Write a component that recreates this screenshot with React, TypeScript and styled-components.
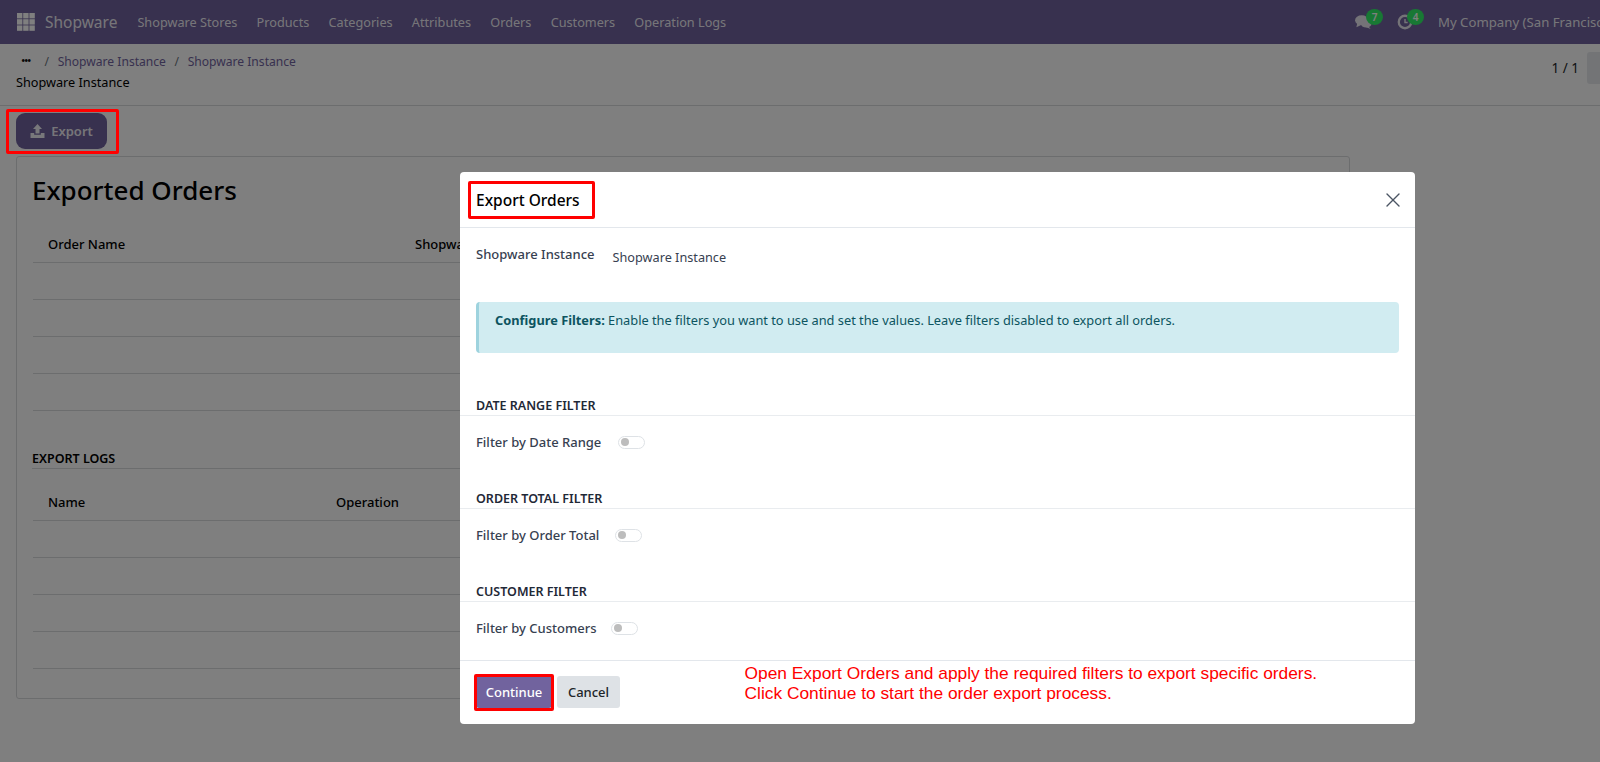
import React from 'react';
import styled, { createGlobalStyle } from 'styled-components';
import { X } from 'lucide-react';

const FONT = '"Noto Sans", "Open Sans", sans-serif';

const GlobalStyle = createGlobalStyle`
  * {
    box-sizing: border-box;
    margin: 0;
    padding: 0;
  }

  html, body {
    width: 1600px;
    height: 762px;
    overflow: hidden;
    background: #fff;
    font-family: ${FONT};
    font-size: 13px;
    color: #212529;
  }
`;

const Page = styled.div`
  position: relative;
  width: 1600px;
  height: 762px;
  overflow: hidden;
  display: flex;
  flex-direction: column;
`;

const Navbar = styled.header`
  height: 44px;
  flex: none;
  background: #71639e;
  display: flex;
  align-items: center;
  padding-left: 17px;
  color: rgba(255, 255, 255, 0.9);
  white-space: nowrap;
`;

const AppsGrid = styled.svg`
  width: 18px;
  height: 18px;
  flex: none;
  margin-right: 10px;
`;

const Brand = styled.span`
  font-size: 15.5px;
  margin-right: 20px;
`;

const NavItem = styled.span`
  font-size: 12.7px;
  margin-right: 19.2px;
`;

const NavRight = styled.div`
  margin-left: auto;
  display: flex;
  align-items: center;
  width: 246px;
  flex: none;
  overflow: hidden;
  height: 100%;
`;

const Systray = styled.span<{ $w: number }>`
  position: relative;
  display: inline-flex;
  width: ${(p) => p.$w}px;
  height: 20px;
  align-items: center;
  flex: none;
`;

const Badge = styled.span<{ $left: number }>`
  position: absolute;
  top: -3px;
  left: ${(p) => p.$left}px;
  width: 17px;
  height: 16px;
  border-radius: 50%;
  background: #30f068;
  color: #fff;
  font-size: 10px;
  font-weight: 600;
  display: flex;
  align-items: center;
  justify-content: center;
`;

const Company = styled.span`
  font-size: 13.2px;
`;

const ControlPanel = styled.div`
  height: 62px;
  flex: none;
  border-bottom: 1px solid #d8dadd;
  padding: 8px 0 0 16px;
  display: flex;
  justify-content: space-between;
`;

const Crumbs = styled.div`
  display: flex;
  flex-direction: column;
  gap: 3px;
`;

const CrumbRow = styled.div`
  display: flex;
  align-items: center;
  height: 18px;
  gap: 8.6px;
  font-size: 12.1px;
  color: #71639e;
`;

const Dots = styled.span`
  font-weight: 800;
  color: #111;
  width: 20px;
  text-align: center;
  font-size: 9px;
  letter-spacing: -0.5px;
  line-height: 10px;
`;

const Slash = styled.span`
  color: #6c757d;
`;

const CrumbTitle = styled.div`
  font-size: 12.7px;
  line-height: 18px;
  color: #000;
`;

const Pager = styled.div`
  display: flex;
  align-items: flex-start;
  gap: 8px;
  height: 32px;
  font-size: 13.5px;
  line-height: 32px;
`;

const PagerButton = styled.span`
  width: 13px;
  height: 32px;
  background: #e7e9ed;
  border-radius: 3px 0 0 3px;
`;

const Toolbar = styled.div`
  height: 50px;
  flex: none;
  padding: 7px 0 0 16px;
`;

const ExportButton = styled.button`
  width: 91px;
  height: 36px;
  background: #71639e;
  color: rgba(255, 255, 255, 0.9);
  border: none;
  border-radius: 9px;
  font-family: inherit;
  font-size: 13px;
  font-weight: 600;
  display: flex;
  align-items: center;
  justify-content: center;
  gap: 6px;
`;

const Sheet = styled.section`
  width: 1334px;
  height: 543px;
  margin-left: 16px;
  flex: none;
  border: 1px solid #d8dadd;
  border-radius: 3px;
  padding: 0 16px;
`;

const SheetTitle = styled.h1`
  font-size: 26px;
  font-weight: 500;
  line-height: 36px;
  color: #000;
  margin: 15px 0 0 -1px;
  height: 54px;
`;

const TableHead = styled.div<{ $second: number }>`
  display: grid;
  grid-template-columns: ${(p) => p.$second}px 1fr;
  height: 37px;
  align-items: center;
  padding: 0 15px;
  font-weight: 500;
  font-size: 13px;
  border-bottom: 1px solid #d8dadd;
  color: #000;
`;

const EmptyRow = styled.div`
  height: 37.1px;
  border-bottom: 1px solid #d8dadd;
`;

const LogsTitle = styled.h2`
  font-size: 12.5px;
  font-weight: 600;
  line-height: 17px;
  margin: 38.4px 0 0 -1px;
  border-bottom: 1px solid #d8dadd;
  color: #000;
  height: 19px;
`;

const LogsSpacer = styled.div`
  height: 15px;
`;

const Overlay = styled.div`
  position: absolute;
  inset: 0;
  background: rgba(0, 0, 0, 0.5);
  display: flex;
  align-items: flex-start;
  justify-content: flex-start;
  padding: 172px 0 0 460px;
`;

const Modal = styled.div`
  position: relative;
  width: 955px;
  height: 552px;
  background: #fff;
  border-radius: 4px;
  display: flex;
  flex-direction: column;
`;

const ModalHeader = styled.div`
  height: 56px;
  flex: none;
  display: flex;
  align-items: center;
  justify-content: space-between;
  padding: 0 10px 0 16px;
  border-bottom: 1px solid #e3e7ec;
`;

const ModalTitle = styled.h3`
  font-size: 15.5px;
  font-weight: 500;
  color: #000;
`;

const ModalBody = styled.div`
  flex: 1;
  padding-top: 17px;
`;

const InstanceRow = styled.div`
  display: flex;
  padding: 0 16px;
  height: 57px;
`;

const FieldLabel = styled.span`
  font-size: 13px;
  font-weight: 500;
  color: #374151;
`;

const InstanceValue = styled.span`
  margin-left: 18px;
  margin-top: 3px;
  font-size: 12.7px;
  color: #374151;
`;

const Alert = styled.div`
  margin: 0 16px;
  height: 51px;
  background: #d1ecf1;
  border-left: 3px solid #9ed3de;
  border-radius: 4px;
  padding: 9px 16px;
  font-size: 12.8px;
  color: #0c5460;
`;

const FilterGroup = styled.div<{ $gap: number }>`
  margin-top: ${(p) => p.$gap}px;
`;

const GroupTitle = styled.h4`
  font-size: 12.5px;
  font-weight: 600;
  line-height: 17px;
  padding: 0 16px 1px;
  border-bottom: 1px solid #e9ecef;
  color: #1f2937;
`;

const FilterRow = styled.div`
  display: flex;
  align-items: center;
  height: 18px;
  margin-top: 17px;
  padding-left: 16px;
`;

const Toggle = styled.span<{ $offset: number }>`
  width: 27px;
  height: 13px;
  margin-left: ${(p) => p.$offset}px;
  border: 1px solid #dee2e6;
  border-radius: 7px;
  display: flex;
  align-items: center;
  padding-left: 2px;

  &::before {
    content: '';
    width: 8px;
    height: 8px;
    border-radius: 50%;
    background: #bdbdbd;
  }
`;

const ModalFooter = styled.div`
  height: 64px;
  flex: none;
  border-top: 1px solid #e3e7ec;
  display: flex;
  align-items: flex-start;
  gap: 4px;
  padding: 15px 0 0 16px;
`;

const FooterButton = styled.button<{ $primary?: boolean }>`
  height: 32px;
  width: ${(p) => (p.$primary ? 76 : 63)}px;
  margin-left: ${(p) => (p.$primary ? 0 : 1)}px;
  border: none;
  border-radius: 3px;
  background: ${(p) => (p.$primary ? '#71639e' : '#dee2e6')};
  color: ${(p) => (p.$primary ? '#fff' : '#212529')};
  font-family: inherit;
  font-size: 13px;
  font-weight: 500;
`;

const RedBox = styled.div<{ $x: number; $y: number; $w: number; $h: number }>`
  position: absolute;
  left: ${(p) => p.$x}px;
  top: ${(p) => p.$y}px;
  width: ${(p) => p.$w}px;
  height: ${(p) => p.$h}px;
  border: 3px solid #ff0000;
  border-radius: 2px;
`;

const Annotation = styled.div`
  position: absolute;
  left: 744.5px;
  top: 663px;
  color: #ff0000;
  font-family: "Liberation Sans", Arial, sans-serif;
  font-size: 17.35px;
  line-height: 20px;
  white-space: nowrap;
`;

const ChatIcon = () => (
  <svg width="19" height="16" viewBox="0 0 20 18" fill="#fff" style={{ opacity: 0.85 }}>
    <ellipse cx="8" cy="7" rx="7.5" ry="5.5" />
    <path d="M3 10 L2 15 L8 12 Z" />
    <ellipse cx="13" cy="11" rx="6" ry="4.2" />
    <path d="M15 13 L18 17 L11 14 Z" />
  </svg>
);

const ClockIcon = () => (
  <svg width="16" height="16" viewBox="0 0 18 18" fill="none" stroke="#fff" strokeWidth="2.6" style={{ opacity: 0.85 }}>
    <circle cx="9" cy="9" r="7" />
    <path d="M9 5.5 V9.5 H12" strokeWidth="1.6" />
  </svg>
);

const UploadIcon = () => (
  <svg width="15" height="14" viewBox="0 0 15 14" fill="currentColor">
    <path d="M7.5 0 L12 5 H9.5 V9.5 H5.5 V5 H3 Z" />
    <path d="M0.5 9 H4.2 V10.8 H10.8 V9 H14.5 V14 H0.5 Z" />
  </svg>
);

const navItems = ['Shopware Stores', 'Products', 'Categories', 'Attributes', 'Orders', 'Customers', 'Operation Logs'];
const filters = [
  { title: 'DATE RANGE FILTER', label: 'Filter by Date Range', offset: 17, gap: 44 },
  { title: 'ORDER TOTAL FILTER', label: 'Filter by Order Total', offset: 16, gap: 39 },
  { title: 'CUSTOMER FILTER', label: 'Filter by Customers', offset: 15, gap: 39 },
];

export default function App() {
  return (
    <Page>
      <GlobalStyle />
      <Navbar>
        <AppsGrid viewBox="0 0 18 18" fill="#fff">
          {[0, 6.2, 12.4].flatMap((y) =>
            [0, 6.2, 12.4].map((x) => <rect key={`${x}-${y}`} x={x} y={y} width="5.4" height="5.4" />),
          )}
        </AppsGrid>
        <Brand>Shopware</Brand>
        {navItems.map((item) => (
          <NavItem key={item}>{item}</NavItem>
        ))}
        <NavRight>
          <Systray $w={43}>
            <ChatIcon />
            <Badge $left={12}>7</Badge>
          </Systray>
          <Systray $w={41}>
            <ClockIcon />
            <Badge $left={10}>4</Badge>
          </Systray>
          <Company>My Company (San Francisco)</Company>
        </NavRight>
      </Navbar>

      <ControlPanel>
        <Crumbs>
          <CrumbRow>
            <Dots>•••</Dots>
            <Slash>/</Slash>
            <span>Shopware Instance</span>
            <Slash>/</Slash>
            <span>Shopware Instance</span>
          </CrumbRow>
          <CrumbTitle>Shopware Instance</CrumbTitle>
        </Crumbs>
        <Pager>
          <span>1 / 1</span>
          <PagerButton />
        </Pager>
      </ControlPanel>

      <Toolbar>
        <ExportButton>
          <UploadIcon />
          Export
        </ExportButton>
      </Toolbar>

      <Sheet>
        <SheetTitle>Exported Orders</SheetTitle>
        <TableHead $second={367}>
          <span>Order Name</span>
          <span>Shopware Order</span>
        </TableHead>
        {[0, 1, 2, 3].map((i) => (
          <EmptyRow key={i} />
        ))}
        <LogsTitle>EXPORT LOGS</LogsTitle>
        <LogsSpacer />
        <TableHead $second={288}>
          <span>Name</span>
          <span>Operation</span>
        </TableHead>
        {[0, 1, 2, 3].map((i) => (
          <EmptyRow key={i} />
        ))}
      </Sheet>

      <Overlay>
        <Modal>
          <ModalHeader>
            <ModalTitle>Export Orders</ModalTitle>
            <X size={24} strokeWidth={1.4} color="#4b5563" />
          </ModalHeader>
          <ModalBody>
            <InstanceRow>
              <FieldLabel>Shopware Instance</FieldLabel>
              <InstanceValue>Shopware Instance</InstanceValue>
            </InstanceRow>
            <Alert>
              <strong>Configure Filters:</strong> Enable the filters you want to use and set the values. Leave filters
              disabled to export all orders.
            </Alert>
            {filters.map((f) => (
              <FilterGroup key={f.title} $gap={f.gap}>
                <GroupTitle>{f.title}</GroupTitle>
                <FilterRow>
                  <FieldLabel>{f.label}</FieldLabel>
                  <Toggle $offset={f.offset} />
                </FilterRow>
              </FilterGroup>
            ))}
          </ModalBody>
          <ModalFooter>
            <FooterButton $primary>Continue</FooterButton>
            <FooterButton>Cancel</FooterButton>
          </ModalFooter>
        </Modal>
      </Overlay>

      <RedBox $x={6} $y={109} $w={113} $h={45} />
      <RedBox $x={468} $y={181} $w={127} $h={38} />
      <RedBox $x={474} $y={674} $w={80} $h={37} />
      <Annotation>
        Open Export Orders and apply the required filters to export specific orders.
        <br />
        Click Continue to start the order export process.
      </Annotation>
    </Page>
  );
}
